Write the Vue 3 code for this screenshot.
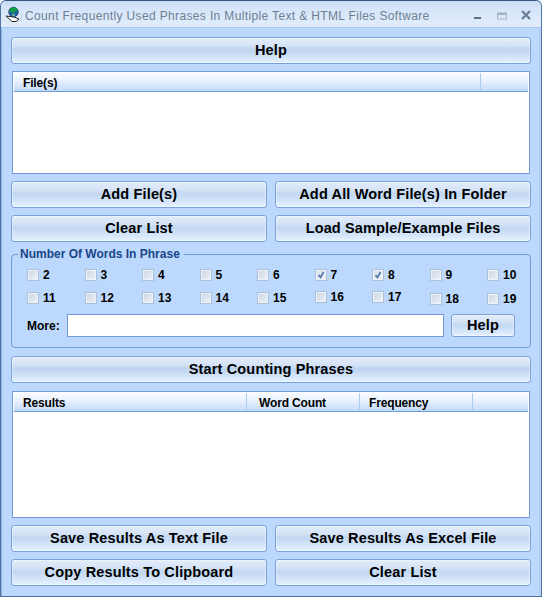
<template>
  <div class="window">
    <div class="titlebar">
      <svg class="app-icon" viewBox="0 0 18 18" width="18" height="18">
        <path d="M1 11l6 5.500h4l3-2.500-5-2z" fill="#fff" stroke="#222" stroke-width="1"/>
        <path d="M13.500 16.500c2.500-.5 3.500-3.500 2.500-7" fill="none" stroke="#b7c9df" stroke-width="1"/>
        <circle cx="8.500" cy="7" r="4.800" fill="#1f5fa8" stroke="#173650" stroke-width="0.700"/>
        <path d="M5 3.500c2-1.500 5-1.500 7 0l.5 2.500-2.500.5-1 2-2-1-2.500-1z" fill="#10a044"/>
        <path d="M7 9.500l2.500-.5.500 1.500-2 .5z" fill="#86d49a"/>
      </svg>
      <span class="title">Count Frequently Used Phrases In Multiple Text &amp; HTML Files Software</span>
      <div class="controls">
        <svg viewBox="0 0 10 10" width="10" height="10"><rect x="1" y="7" width="7" height="2" fill="#5d7288"/></svg>
        <svg viewBox="0 0 10 10" width="10" height="10"><rect x="0.500" y="3" width="9" height="6" fill="none" stroke="#a4b2c4"/><rect x="0.500" y="3" width="9" height="2" fill="#a4b2c4"/></svg>
        <svg viewBox="0 0 10 10" width="10" height="10"><path d="M1 1l8 8M9 1l-8 8" stroke="#6b8099" stroke-width="2.400"/></svg>
      </div>
    </div>

    <div class="content">
      <button class="btn tall">Help</button>

      <div class="list files">
        <div class="list-head">
          <span class="col" style="width: 467px">File(s)</span>
        </div>
      </div>

      <div class="btn-row">
        <button class="btn">Add File(s)</button>
        <button class="btn">Add All Word File(s) In Folder</button>
      </div>
      <div class="btn-row">
        <button class="btn">Clear List</button>
        <button class="btn">Load Sample/Example Files</button>
      </div>

      <fieldset class="group">
        <legend>Number Of Words In Phrase</legend>
        <div class="checks">
          <label v-for="n in numbers" :key="n" class="check" :class="{ up: n === 16 || n === 17, down: n === 18 || n === 19 }">
            <span class="box" :class="{ on: checked.includes(n) }">
              <svg v-if="checked.includes(n)" viewBox="0 0 10 10" width="10" height="10"><path d="M2.500 5l2 2.500 3-5.500" fill="none" stroke="#5a7cab" stroke-width="1.800"/></svg>
            </span>
            {{ n }}
          </label>
        </div>
        <div class="more-row">
          <span class="more-label">More:</span>
          <input class="more-input" type="text" />
          <button class="btn small">Help</button>
        </div>
      </fieldset>

      <button class="btn tall start">Start Counting Phrases</button>

      <div class="list results">
        <div class="list-head">
          <span class="col" style="width: 233px">Results</span>
          <span class="col wc" style="width: 113px">Word Count</span>
          <span class="col" style="width: 113px">Frequency</span>
        </div>
      </div>

      <div class="btn-row">
        <button class="btn">Save Results As Text File</button>
        <button class="btn">Save Results As Excel File</button>
      </div>
      <div class="btn-row">
        <button class="btn">Copy Results To Clipboard</button>
        <button class="btn">Clear List</button>
      </div>
    </div>
  </div>
</template>

<script setup>
const numbers = Array.from({ length: 18 }, (_, i) => i + 2)
const checked = [7, 8]
</script>

<style>
html, body { margin: 0; background: #f4f8fe; }
</style>

<style scoped>
.window {
  width: 542px; height: 597px; box-sizing: border-box; display: flex; flex-direction: column; overflow: hidden;
  background: #bcd9fd; border: 1px solid #4f74a4; border-top-color: #35547f; border-radius: 6px 6px 0 0;
  font-family: "Liberation Sans", Arial, sans-serif;
}
.titlebar {
  height: 27px; flex-shrink: 0; display: flex; align-items: center; padding: 0 10px 0 4px; box-sizing: border-box;
  background: linear-gradient(#c9dcf6, #d6e5f9 30%, #e2edfb); border-bottom: 1px solid #a9c8ef;
}
.app-icon { flex-shrink: 0; margin-right: 2px; }
.title { font-size: 12px; letter-spacing: 0.36px; color: #6e7f94; white-space: nowrap; flex: 1; margin-top: 3px; }
.controls { display: flex; align-items: center; gap: 14px; margin-top: 2px; }
.controls svg { display: block; }
.content {
  flex: 1; display: flex; flex-direction: column; padding: 9px 8px 0 9px; margin-right: 1px;
  border-left: 1px solid #8fb2e0; border-right: 1px solid #a9c8ef;
}
.btn {
  height: 27px; box-sizing: border-box; padding: 0 0 2px; width: 100%; display: block; flex-shrink: 0;
  border: 1px solid #7ba3d9; border-radius: 3px; color: #000;
  font: bold 14.500px "Liberation Sans", Arial, sans-serif; letter-spacing: 0.15px;
  background: linear-gradient(#e3edfb, #d5e3f6 30%, #c3d8f2 48%, #d0e2f8 70%, #e6f2ff);
  box-shadow: inset 0 0 0 1px rgba(255, 255, 255, 0.35);
}
.tall { background: linear-gradient(#e3edfb, #d5e3f6 30%, #bdd3ef 48%, #cde0f7 70%, #e6f2ff); }
.list { margin: 7px 1px 0; border: 1px solid #6f9bd6; background: #fff; padding: 0 1px; box-sizing: border-box; }
.files { height: 103px; }
.results { height: 127px; margin-top: 8px; }
.list-head {
  height: 20px; display: flex; box-sizing: border-box; padding-bottom: 1px;
  background: linear-gradient(#fdfeff, #e8f1fd 45%, #c2daf8); border-bottom: 1px solid #6f9bd6;
}
.col {
  box-sizing: border-box; padding: 3px 0 0 9px; font-size: 12px; font-weight: bold; color: #000; letter-spacing: -0.15px;
  border-right: 1px solid #a8c9f2; margin: 1px 0 0;
}
.col.wc { padding-left: 12px; }
.btn-row { display: grid; grid-template-columns: 256px 256px; gap: 8px; margin-top: 7px; }
.group {
  margin: 5px 0 0; padding: 0 15px 0; height: 101px; box-sizing: border-box;
  border: 1px solid #6f9bd6; border-radius: 4px; min-width: 0;
}
.group legend {
  margin-left: -9px; padding: 0 4px 0 2px; font-size: 12px; font-weight: bold; color: #1a4688; line-height: 14px;
}
.checks { display: grid; grid-template-columns: repeat(9, 57.500px); grid-template-rows: 12px 12px; row-gap: 11px; margin-top: 8px; }
.check { display: flex; align-items: center; gap: 4px; height: 12px; font-size: 12px; font-weight: bold; color: #000; }
.check.up { margin-top: -1px; }
.check.down { margin-top: 1px; }
.box {
  width: 12px; height: 12px; box-sizing: border-box; border: 1px solid #abc0d9; flex-shrink: 0;
  background: linear-gradient(135deg, #c9d4e2, #f0f3f8); box-shadow: inset 0 0 0 1px #eef3f9;
  display: flex; align-items: center; justify-content: center;
}
.box.on { background: linear-gradient(135deg, #d5deea, #f0f3f8); }
.box svg { display: block; }
.more-row { display: flex; align-items: center; margin-top: 10px; }
.more-label { width: 40px; font-size: 12px; font-weight: bold; color: #000; flex-shrink: 0; }
.more-input {
  width: 377px; height: 23px; box-sizing: border-box; border: 1px solid #6f9bd6; background: #fff; padding: 0; outline: none; flex-shrink: 0;
}
.btn.small { width: 64px; height: 23px; margin-left: 7px; flex-shrink: 0; }
.start { margin-top: 8px; }
</style>
